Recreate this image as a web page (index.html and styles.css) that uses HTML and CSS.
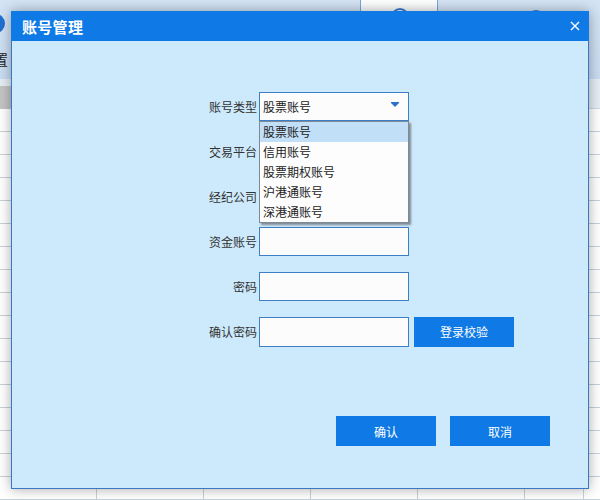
FILE: index.html
```html
<!DOCTYPE html>
<html>
<head>
<meta charset="utf-8">
<link rel="stylesheet" href="styles.css">
</head>
<body>
<div class="app">
  <div class="app-top">
    <div class="app-logo"></div>
    <div class="app-tab"><span class="tab-circle"></span></div>
    <div class="app-icon"></div>
    <div class="app-side-text">置</div>
  </div>
  <div class="app-toolbar"><div class="toolbar-left"></div></div>
  <div class="app-table">
    <div class="trow"><span></span><span></span><span></span><span></span><span></span><span></span></div>
    <div class="trow"><span></span><span></span><span></span><span></span><span></span><span></span></div>
    <div class="trow"><span></span><span></span><span></span><span></span><span></span><span></span></div>
    <div class="trow"><span></span><span></span><span></span><span></span><span></span><span></span></div>
    <div class="trow"><span></span><span></span><span></span><span></span><span></span><span></span></div>
    <div class="trow"><span></span><span></span><span></span><span></span><span></span><span></span></div>
    <div class="trow"><span></span><span></span><span></span><span></span><span></span><span></span></div>
    <div class="trow"><span></span><span></span><span></span><span></span><span></span><span></span></div>
    <div class="trow"><span></span><span></span><span></span><span></span><span></span><span></span></div>
    <div class="trow"><span></span><span></span><span></span><span></span><span></span><span></span></div>
    <div class="trow"><span></span><span></span><span></span><span></span><span></span><span></span></div>
    <div class="trow"><span></span><span></span><span></span><span></span><span></span><span></span></div>
    <div class="trow"><span></span><span></span><span></span><span></span><span></span><span></span></div>
    <div class="trow"><span></span><span></span><span></span><span></span><span></span><span></span></div>
    <div class="trow"><span></span><span></span><span></span><span></span><span></span><span></span></div>
    <div class="trow"><span></span><span></span><span></span><span></span><span></span><span></span></div>
    <div class="trow"><span></span><span></span><span></span><span></span><span></span><span></span></div>
  </div>
</div>

<div class="dialog">
  <div class="dialog-head">
    <span class="dialog-title">账号管理</span>
    <svg class="dialog-close" width="10" height="10" viewBox="0 0 10 10">
      <path d="M1 1 L9 9 M9 1 L1 9" stroke="#ffffff" stroke-width="1.4" fill="none"/>
    </svg>
  </div>
  <div class="dialog-body">
    <div class="form">
      <div class="frow">
        <label class="flabel">账号类型</label>
        <div class="select">
          <span class="select-text">股票账号</span>
          <svg class="select-arrow" width="8" height="5" viewBox="0 0 8 5">
            <path d="M0 0 H8 V1 L4 5 L0 1 Z" fill="#2a72c8"/>
          </svg>
          <ul class="dropdown">
            <li class="active">股票账号</li>
            <li>信用账号</li>
            <li>股票期权账号</li>
            <li>沪港通账号</li>
            <li>深港通账号</li>
          </ul>
        </div>
      </div>
      <div class="frow">
        <label class="flabel">交易平台</label>
        <div class="input"></div>
      </div>
      <div class="frow">
        <label class="flabel">经纪公司</label>
        <div class="input"></div>
      </div>
      <div class="frow">
        <label class="flabel">资金账号</label>
        <div class="input"></div>
      </div>
      <div class="frow">
        <label class="flabel">密码</label>
        <div class="input"></div>
      </div>
      <div class="frow">
        <label class="flabel">确认密码</label>
        <div class="input"></div>
        <button class="btn btn-verify">登录校验</button>
      </div>
    </div>
    <div class="footer">
      <button class="btn">确认</button>
      <button class="btn">取消</button>
    </div>
  </div>
</div>
</body>
</html>
```

FILE: styles.css
```css
html, body {
  margin: 0;
  padding: 0;
}
body {
  width: 600px;
  height: 500px;
  overflow: hidden;
  font-family: "Noto Sans CJK SC", "Noto Sans", sans-serif;
  background: #ffffff;
  position: relative;
}

/* background application */
.app {
  width: 600px;
  height: 500px;
  display: flex;
  flex-direction: column;
}
.app-top {
  height: 82px;
  background: linear-gradient(#d4e4f5, #c9dcf1);
  position: relative;
}
.app-logo {
  position: absolute;
  left: -14px;
  top: 14px;
  width: 19px;
  height: 19px;
  border-radius: 50%;
  background: #1f6fd1;
}
.app-tab {
  position: absolute;
  left: 360px;
  top: 0;
  width: 76px;
  height: 48px;
  background: linear-gradient(#ffffff, #e8eef6);
  border-left: 1px solid #7aa6d8;
  border-right: 1px solid #7aa6d8;
}
.tab-circle {
  position: absolute;
  left: 30px;
  top: 8px;
  width: 14px;
  height: 14px;
  border: 2px solid #3b7ccd;
  border-radius: 50%;
}
.app-icon {
  position: absolute;
  left: 526px;
  top: 10px;
  width: 16px;
  height: 16px;
  border: 2px solid #3b7ccd;
  border-radius: 50%;
}
.app-side-text {
  position: absolute;
  left: -6px;
  top: 49px;
  font-size: 14px;
  color: #222;
}
.app-toolbar {
  height: 30px;
  background: #e6edf5;
  border-bottom: 1px solid #d0d8e0;
  box-sizing: border-box;
  padding-top: 7px;
}
.toolbar-left {
  width: 11px;
  height: 23px;
  background: #c4c4c4;
}
.app-table {
  display: flex;
  flex-direction: column;
  background: #ffffff;
}
.trow {
  height: 23px;
  display: flex;
  border-bottom: 1px solid #c9d1da;
  box-sizing: border-box;
}
.trow span {
  width: 107px;
  flex: none;
  border-right: 1px solid #c9d1da;
  box-sizing: border-box;
}
.trow span:first-child {
  width: 97px;
}
.trow span:last-child {
  width: 59px;
}

/* dialog overlay */
.dialog {
  position: absolute;
  left: 11px;
  top: 11px;
  width: 578px;
  height: 478px;
  display: flex;
  flex-direction: column;
  box-shadow: 0 0 12px rgba(0, 0, 0, 0.35);
}
.dialog-head {
  height: 30px;
  flex: none;
  background: #0f7ae6;
  display: flex;
  align-items: center;
  justify-content: space-between;
  padding: 0 9px 0 11px;
}
.dialog-title {
  color: #ffffff;
  font-size: 15px;
  font-weight: bold;
  letter-spacing: 0.3px;
}
.dialog-close {
  display: block;
}
.dialog-body {
  flex: 1;
  background: #cdeafc;
  border: 1px solid #3a78c5;
  border-top: none;
  display: flex;
  flex-direction: column;
}
.form {
  padding: 51px 0 0 165px;
  display: flex;
  flex-direction: column;
  gap: 16px;
}
.frow {
  display: flex;
  align-items: center;
  height: 29px;
}
.flabel {
  width: 80px;
  text-align: right;
  font-size: 12px;
  color: #333333;
  margin-right: 2px;
}
.input, .select {
  width: 150px;
  height: 29px;
  box-sizing: border-box;
  background: #fcfcfc;
  border: 1px solid #3d80c6;
}
.frow:last-child .input {
  height: 30px;
}
.select {
  position: relative;
  display: flex;
  align-items: center;
  padding-left: 3px;
}
.select-text {
  font-size: 12px;
  color: #222;
}
.select-arrow {
  position: absolute;
  right: 9px;
  top: 9px;
}
.dropdown {
  position: absolute;
  left: -1px;
  top: 28px;
  width: 150px;
  margin: 0;
  padding: 0;
  list-style: none;
  background: #fdfdfd;
  border: 1px solid #7f8a94;
  box-sizing: border-box;
  box-shadow: 2px 2px 2px rgba(60, 60, 60, 0.55);
  z-index: 2;
}
.dropdown li {
  height: 20px;
  line-height: 20px;
  font-size: 12px;
  color: #222;
  padding-left: 3px;
}
.dropdown li.active {
  background: #c2dff8;
}
.btn {
  width: 100px;
  height: 30px;
  border: none;
  background: #0f7ae6;
  color: #ffffff;
  font-family: "Noto Sans CJK SC", "Noto Sans", sans-serif;
  font-size: 12px;
  padding: 0;
}
.btn-verify {
  margin-left: 5px;
}
.footer {
  margin-top: 70px;
  display: flex;
  justify-content: flex-end;
  gap: 14px;
  padding-right: 38px;
}
```
